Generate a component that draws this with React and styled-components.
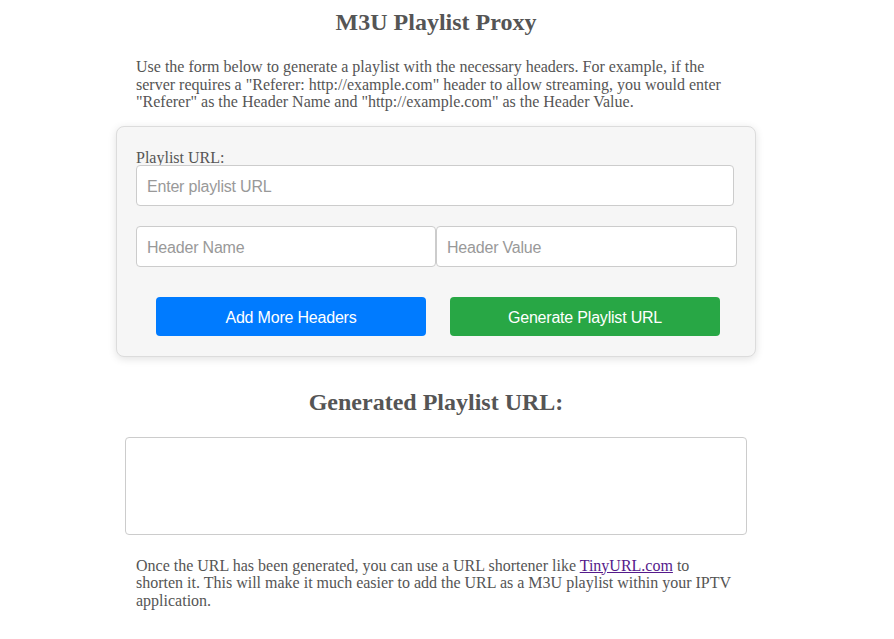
import React from "react";
import styled, { createGlobalStyle } from "styled-components";

const Global = createGlobalStyle`
  html, body { margin: 0; padding: 0; background: #fff; }
  body { font-family: "Liberation Serif", "Times New Roman", serif; color: #555; }
`;

const Page = styled.div`
  width: 872px;
  padding-top: 9px;
  padding-bottom: 20px;
`;

const Main = styled.main`
  width: 640px;
  margin: 0 auto;
  display: flex;
  flex-direction: column;
`;

const Title = styled.h1`
  margin: 0;
  font-size: 24px;
  font-weight: bold;
  text-align: center;
  color: #555;
`;

const Text = styled.p`
  margin: ${(p) => p.$mt || 0}px 20px 0;
  font-size: 16px;
  line-height: 17.5px;
  color: #555;
`;

const Card = styled.div`
  margin-top: 15px;
  background: #f6f6f6;
  border: 1px solid #dcdcdc;
  border-radius: 8px;
  box-shadow: 0 2px 8px rgba(0, 0, 0, 0.12);
  padding: 23px 19px 20px;
  display: flex;
  flex-direction: column;
`;

const Label = styled.label`
  font-size: 16px;
  line-height: 15px;
  color: #555;
`;

const Input = styled.input`
  box-sizing: border-box;
  width: ${(p) => p.$w || "100%"};
  height: 41px;
  padding: 3px 10px 0;
  border: 1px solid #ccc;
  border-radius: 4px;
  background: #fff;
  font-family: "Liberation Sans", Arial, sans-serif;
  font-size: 16px;
  letter-spacing: -0.2px;
  color: #333;
  outline: none;
  &::placeholder { color: #999; }
`;

const HeaderRow = styled.div`
  display: flex;
  margin-top: 20px;
  width: 601px;
`;

const ButtonRow = styled.div`
  display: flex;
  gap: 24px;
  padding-left: 20px;
  margin-top: 30px;
`;

const Button = styled.button`
  width: 270px;
  height: 39px;
  padding: 3px 0 0;
  border: none;
  border-radius: 4px;
  background: ${(p) => p.$bg};
  color: #fff;
  font-family: "Liberation Sans", Arial, sans-serif;
  font-size: 16px;
  letter-spacing: -0.2px;
  cursor: pointer;
`;

const SubTitle = styled.h2`
  margin: 32px 0 0;
  font-size: 24px;
  font-weight: bold;
  text-align: center;
  color: #555;
`;

const Output = styled.textarea`
  box-sizing: border-box;
  display: block;
  margin: 21px 9px 0;
  width: 622px;
  height: 98px;
  border: 1px solid #ccc;
  border-radius: 4px;
  resize: none;
  background: #fff;
  outline: none;
`;

const Link = styled.a`
  color: #551a8b;
  text-decoration: underline;
`;

export default function App() {
  return (
    <>
      <Global />
      <Page>
        <Main>
          <Title>M3U Playlist Proxy</Title>
          <Text $mt={22}>
            Use the form below to generate a playlist with the necessary headers. For example, if the
            server requires a "Referer: http://example.com" header to allow streaming, you would enter
            "Referer" as the Header Name and "http://example.com" as the Header Value.
          </Text>
          <Card>
            <Label>Playlist URL:</Label>
            <Input $w="598px" placeholder="Enter playlist URL" />
            <HeaderRow>
              <Input $w="300px" placeholder="Header Name" />
              <Input $w="301px" placeholder="Header Value" />
            </HeaderRow>
            <ButtonRow>
              <Button $bg="#007bff">Add More Headers</Button>
              <Button $bg="#28a745">Generate Playlist URL</Button>
            </ButtonRow>
          </Card>
          <SubTitle>Generated Playlist URL:</SubTitle>
          <Output readOnly />
          <Text $mt={22}>
            Once the URL has been generated, you can use a URL shortener like{" "}
            <Link href="#">TinyURL.com</Link> to shorten it. This will make it much easier to add the
            URL as a M3U playlist within your IPTV application.
          </Text>
        </Main>
      </Page>
    </>
  );
}
